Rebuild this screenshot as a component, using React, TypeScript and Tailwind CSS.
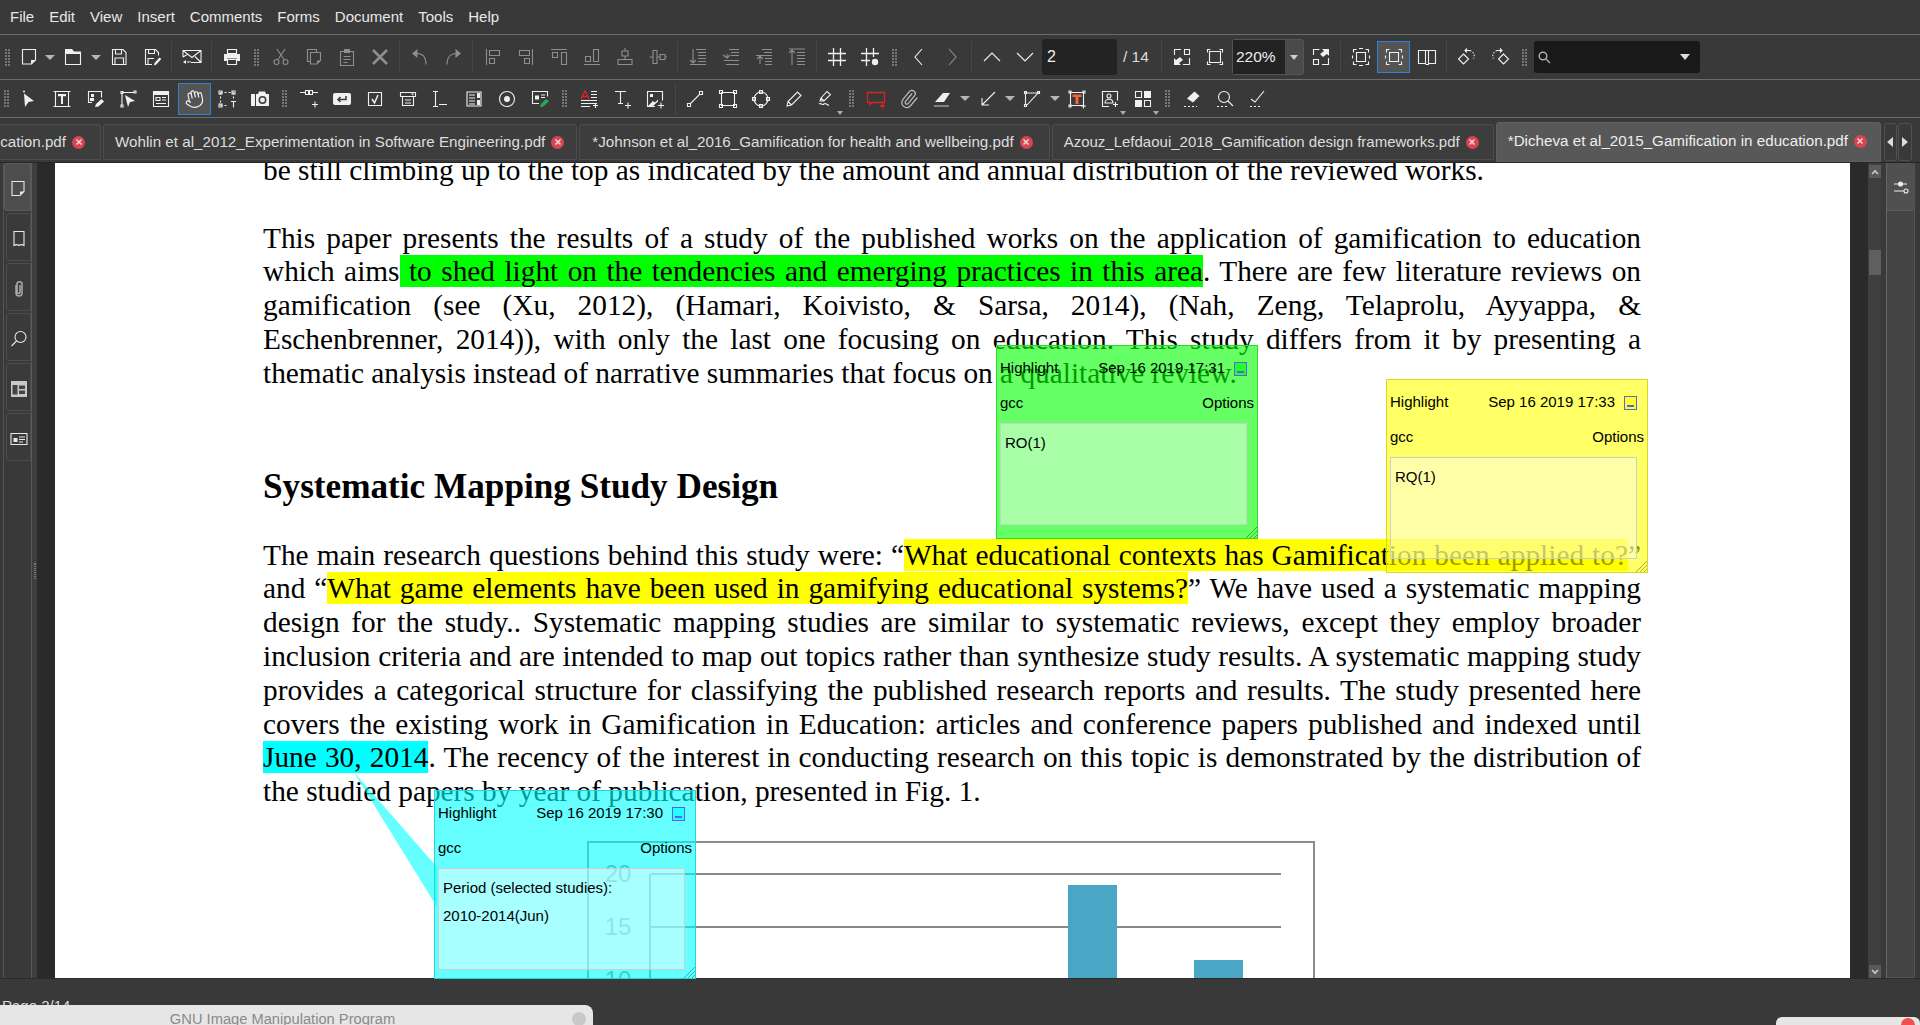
import { Hand, Paperclip } from "lucide-react"
import type { ReactNode } from "react"

const f = { fill: "currentColor", stroke: "none" }

// 20x20 toolbar glyphs, traced from the app
const icons: Record<string, ReactNode> = {
  new: <><path d="M3.5 2.5h13v10.5l-4 4h-9z" /><path d="M12 17v-4h4.5z" {...f} /></>,
  open: <><path d="M2.5 5.5h15v12h-15z" /><path d="M2 2h7l2 2.5h7v2.5H2z" {...f} /></>,
  save: <><path d="M3.5 2.5h10.5l3 3v12h-13.5z" /><path d="M6.5 2.5v4.5h6v-4.5M6 17.5v-6.5h8.5v6.5" /></>,
  saveas: <><path d="M10 17.5h-6.5v-15h10l3 3v3" /><path d="M6.5 2.5v4h6v-4M6 17v-5.5h6" /><path d="M12 18.5l.5-2.5 5-5.5 1.800 1.500-5 5.500z" {...f} /></>,
  mail: <><path d="M1 10v-6.500h18v12h-10M1 3.500l9 7 9-7M19 15.500l-6-6M1 10l5-3" /><path d="M1 15l3-2v4z" {...f} /><path d="M6 14v2M8 14v1.500" /></>,
  print: <><path d="M5.500 2.500h9v4h-9z" /><path d="M2 7h16v7h-3v-2.500H5V14H2z" {...f} /><path d="M5.500 12.500h9v5h-9z" /></>,
  cut: <><path d="M6 2l7 10.500M14 2L7 12.500" /><circle cx="5.500" cy="15" r="2.500" /><circle cx="14.500" cy="15" r="2.500" /></>,
  copy: <><path d="M6 14.500H3.500v-12h9v3" /><path d="M6.500 5.500h10v8L13 17H6.500z" /><path d="M13 17v-3.500h3.500z" {...f} /></>,
  paste: <><path d="M3.500 4.500h13v14h-13z" /><path d="M7 2h6v4H7z" {...f} /><path d="M6.500 9.500h7M6.500 12.500h7M6.500 15.500h4" /></>,
  del: <path strokeWidth="2.600" d="M3 3l14 14M17 3L3 17" />,
  undo: <><path d="M2 6.500L7.500 2v9z" {...f} /><path d="M7 6.500c5 0 9 3 9 11" /></>,
  redo: <><path d="M18 6.500L12.500 2v9z" {...f} /><path d="M13 6.500c-5 0-9 3-9 11" /></>,
  alL: <path d="M3.500 2v16M6.500 3.500h10v5h-10zM6.500 11.500h5v5h-5z" />,
  alR: <path d="M16.500 2v16M3.500 3.500h10v5h-10zM8.500 11.500h5v5h-5z" />,
  alT: <path d="M3.500 5.500h5v5h-5zM12.500 5.500h5v12h-5zM2 2.500h16" />,
  alB: <path d="M2 17.500h16M3.500 9.500h5v5h-5zM11.500 2.500h5v12h-5z" />,
  alC: <path d="M10 1v3M10 9v3M7 4h6v5H7zM3 12.500h14v5H3z" />,
  alM: <path d="M1.500 10H5M9 10h3M17 10h2M5 3.500h4v13H5zM12 7.500h5v5h-5z" />,
  ordF: <path d="M5 2v14M2 13l3 3 3-3M8 2.500h10M10 5.500h8M10 8.500h8M10 11.500h8M10 14.500h8M2 17.500h16" />,
  ordB: <path d="M2 8l4 3 3-3M6 11V7M8 2.500h10M10 5.500h8M10 8.500h8M3 13.500h15M5 17.500h13" />,
  ordU: <path d="M6 17V9M3 12l3-3 3 3M8 2.500h10M10 5.500h8M2 8.500h16M11 11.500h7M11 14.500h7M11 17.500h7" />,
  ordT: <path d="M5 18V3M2 6l3-3 3 3M2 2h16M10 5.500h8M10 8.500h8M10 11.500h8M10 14.500h8M10 17.500h8" />,
  grid: <path strokeWidth="1.300" d="M1 6.500h18M1 13.500h18M6.500 1v18M13.500 1v18" />,
  snap: <><path strokeWidth="1.300" d="M1 6.500h18M1 13.500h9M6.500 1v18M13.500 1v9" /><circle cx="15" cy="15" r="3.200" {...f} /></>,
  prev: <path d="M13 2l-7 8 7 8" />,
  next: <path d="M7 2l7 8-7 8" />,
  up: <path d="M2 14l8-8 8 8" />,
  down: <path d="M2 6l8 8 8-8" />,
  fit: <><path d="M2.500 8V2.500H9M12.500 2.500h5v5h-5zM17.500 11v6.500H11" /><path d="M2 18v-7l2 2 4-3 3 3-4 3 2 2z" {...f} /></>,
  actual: <path d="M2.500 5.500v-3h3M14.500 2.500h3v3M17.500 14.500v3h-3M5.500 17.500h-3v-3M4.500 4.500h11v11h-11z" />,
  expand: <><path d="M2.500 8V2.500h6M2.500 12.500h5v5h-5zM17.500 11v6.500H11" /><path d="M18 2v7l-2-2-4 3-3-3 4-3-2-2z" {...f} /></>,
  fitW: <path d="M2.500 5.500v-3h3M14.500 2.500h3v3M17.500 14.500v3h-3M5.500 17.500h-3v-3M5.500 5.500h9v9h-9zM8 1.500h4M8 18.500h4M1.500 8.500v3M18.500 8.500v3" />,
  fitP: <path d="M2.500 5.500v-3h3M14.500 2.500h3v3M17.500 14.500v3h-3M5.500 17.500h-3v-3M5.500 5.500h9v9h-9zM1.500 8.500v3M18.500 8.500v3" />,
  book: <path d="M1.500 3.500h7v13h-7zM11.500 3.500h7v13h-7zM8.500 3.500h3v14h-3" />,
  rotL: <><path d="M6.500 7l5 5-5 5-5-5z" /><path strokeDasharray="1.500 1.500" d="M13 3.500c3 1 5.500 4 3.500 8" /><path d="M13 3.500H8M10 1.500l-2 2 2 2" /></>,
  rotR: <><path d="M13.500 7l-5 5 5 5 5-5z" /><path strokeDasharray="1.500 1.500" d="M7 3.500c-3 1-5.500 4-3.500 8" /><path d="M7 3.500h5M10 1.500l2 2-2 2" /></>,
  pick: <><circle cx="5" cy="2.500" r="1" {...f} /><path d="M5 4.500l10 7.500-5.500 1-3.500 5z" {...f} /></>,
  field: <><path d="M3.500 2.500v15M16.500 2.500v15M1.500 2.500h17M1.500 17.500h17" /><path d="M6 5h8v2.200h-3V15H9V7.200H6z" {...f} /></>,
  editImg: <><path d="M7 13.500H3.500v-11h13v6" /><path d="M6 5h3v3H6zM5 9h4v3H5z" {...f} /><path d="M10 18l1-3 5.500-5 2.500 2.500-5.500 5z" {...f} /></>,
  linkSel: <><path d="M4 4v12M4 3.500h12" /><path d="M3 2.500h2v2H3zM16 2h2v2h-2zM3 16h2v2H3z" /><path d="M7 6l10 6-5 1-2 5z" {...f} /></>,
  form: <><path d="M2.500 2.500h15v15h-15z" /><path d="M2.500 2.500h15V6h-15z" {...f} /><path d="M5 8.500h4v3H5zM11 8.500h4M11 11h4M5 14.500h10" /></>,
  cropT: <><path strokeDasharray="2 2" d="M3.500 3.500h13M3.500 3.500v13M3.500 16.500h7M16.500 3.500v7" /><path d="M2 2h3v3H2zM15 2h3v3h-3zM2 15h3v3H2z" /><path d="M14 12.500h5M16.500 12.500v6" /></>,
  camera: <><path d="M1 5h4v12H1zM6 5h2l1-2.500h6L16 5h3v12H6z" {...f} /><circle cx="12.500" cy="11" r="3.200" stroke="#3a3a3a" strokeWidth="1.500" fill="none" /></>,
  linkAdd: <path d="M1 3.500h5M14 3.500h5M6.500 1.500h3v4h-3zM10.500 1.500h3v4h-3zM13 15.500h6M16 12.500v6" />,
  btn: <><rect x="1" y="4" width="18" height="12" rx="2" {...f} /><path stroke="#3a3a3a" strokeWidth="1.500" d="M14 7v3.500H6M8.500 8L6 10.500 8.500 13" /></>,
  check: <><path d="M3.500 3.500h13v13h-13z" /><path strokeWidth="1.500" d="M7 10l2.500 4L13 6" /></>,
  combo: <><path d="M2.500 3.500h15v4h-15zM4.500 7.500v9h11v-9M7 11h6M7 14h6" /><path d="M13 4.500h3l-1.500 2z" {...f} /></>,
  date: <path d="M2 2.500h5M4.500 2.500v15M2 17.500h5M8 15.500h8" />,
  list: <><path d="M3 3h14v14H3z" /><path d="M5 6h6M5 9h6M5 12h6M5 15h6" /><path d="M13 4h3v5h-3zM13 11h3v5h-3z" {...f} /></>,
  radio: <><circle cx="10" cy="10" r="7.500" /><circle cx="10" cy="10" r="3" {...f} /></>,
  sign: <><path d="M9 14.500H2.500v-12h15v5" /><path d="M5 6.500h4v4H5z" {...f} /><path d="M11 6h4M11 8.500h4" /><path d="M10 18l1-3 5-5 3 2-5.500 5.500z" fill="#2aa85a" stroke="none" /></>,
  redA: <><path stroke="#e0211f" strokeWidth="1.300" d="M2 10l4-8 4 8M3.500 7.500h5" /><path d="M12 2.500h6M12 5.500h6M12 8.500h6M2 11.500h16M2 14.500h16M2 17.500h9M14 16.500h5M16.500 14v5" /></>,
  textAdd: <path d="M3 2.500h11M8.500 2.500v12M6 14.500h5M13 16.500h6M16 13.500v6" />,
  imgAdd: <><path d="M10 17.500H2.500v-15h15v9" /><path d="M3 17l5-5 2 1.500 3-3v2l-5 4.500z" {...f} /><path d="M5 5h3v3H5z" {...f} /><path d="M13 16.500h6M16 13.500v6" /></>,
  line: <path d="M5 15L15 5M2.500 14.500h3v3h-3zM14.500 2.500h3v3h-3z" />,
  rect: <path d="M3.500 3.500h13v13h-13zM1.500 1.500h3v3h-3zM15.500 1.500h3v3h-3zM15.500 15.500h3v3h-3zM1.500 15.500h3v3h-3z" />,
  oval: <><circle cx="10" cy="10" r="7" /><path d="M8.500 1.500h3v3h-3zM8.500 15.500h3v3h-3zM1.500 8.500h3v3h-3zM15.500 8.500h3v3h-3z" /></>,
  pencil: <path d="M3 17l1-4.500L13.500 3l3.500 3.500L7.500 16zM4 12.500l3.500 3.500" />,
  pen: <><path d="M3 12l1-3 6-6.500 3.500 3-6.500 6.500zM4 9l3 3" /><path d="M2 15c2-2 3 2 5 0s3 2 5 1" /></>,
  note: <><path stroke="#d9261c" strokeWidth="1.300" d="M1.500 3.500h17v10H6l-2 2v-2H1.500zM14 17h5M16.500 14.500v5" /></>,
  hl: <><path d="M3 13l8-9h7l-6 9z" {...f} /><path stroke="#9a9a9a" strokeWidth="1.500" d="M2 17h15" /></>,
  arrow: <path d="M17 3L4 16M4 9v7h7" />,
  poly: <path d="M4 4h12L5 16M3.500 3.500v12M2.500 2.500h2v2h-2zM15.500 2.500h2v2h-2zM2.500 15.500h2v2h-2z" />,
  textbox: <><path d="M3.500 3.500h13v13h-13zM2 2h2v2H2zM16 2h2v2h-2zM2 16h2v2H2z" /><path d="M5.500 5.500h9V8h-3v7h-3V8h-3z" fill="#f2683c" stroke="none" /><path d="M14 17h5M16.500 14.500v5" /></>,
  person: <><path d="M9 17.500H2.500v-15h15v9" /><circle cx="9" cy="7" r="2" /><path d="M5 14c0-5 8-5 8 0h-8zM13 15.500h5M15.500 13v5" /></>,
  tiles: <><path d="M2.500 2.500h6v6h-6zM11.500 11.500h6v6h-6z" /><path d="M11 2h7v7h-7zM2 11h7v7H2z" {...f} /></>,
  eraser: <><path d="M5 9.500L12.500 2.500l5 4.500-6.500 6.500z" {...f} /><path strokeDasharray="2 2" d="M2 17.500h13" /></>,
  find: <><circle cx="9" cy="8" r="5.500" /><path d="M13 12l5 5" /><path strokeDasharray="2 2" d="M2 17.500h12" /></>,
  tick: <><path d="M3 10l4 3 9-11" /><path strokeDasharray="2 2" d="M2 17.500h12" /></>,
}

const dimmed = new Set(["cut", "copy", "paste", "del", "undo", "redo", "alL", "alR", "alT", "alB", "alC", "alM", "ordF", "ordB", "ordU", "ordT", "next"])
const withDrop = new Set(["pen", "person", "tiles"])

function Tool({ name, on, w = "w-[33px]" }: { name: string; on?: boolean; w?: string }) {
  return (
    <div className={`relative ${w} h-[32px] shrink-0 flex items-center justify-center ${dimmed.has(name) ? "text-[#8e8e8e]" : "text-[#f0f0f0]"} ${on ? "bg-[#545454] border border-[#2f80d8]" : ""}`}>
      <svg width="20" height="20" viewBox="0 0 20 20" fill="none" stroke="currentColor" strokeWidth="1.100">
        {icons[name]}
      </svg>
      {withDrop.has(name) && (
        <span className="absolute right-[1px] bottom-0 w-0 h-0 border-x-[3.500px] border-x-transparent border-t-[4px] border-t-[#aaa]" />
      )}
    </div>
  )
}

const Sep = () => (
  <div className="w-[7px] shrink-0 h-[32px] flex justify-center">
    <div className="w-px h-full bg-[#474747]" />
  </div>
)

function Grip({ w = "w-[16px]" }: { w?: string }) {
  return (
    <div className={`${w} shrink-0 flex justify-center`}>
      <div className="grid grid-cols-2 gap-px">
        {Array.from({ length: 12 }).map((_, i) => (
          <div key={i} className="w-[2px] h-[2px] bg-[#777]" />
        ))}
      </div>
    </div>
  )
}

function Caret({ w }: { w: string }) {
  return (
    <div className={`${w} shrink-0 flex justify-center`}>
      <div className="w-0 h-0 border-x-[5px] border-x-transparent border-t-[5px] border-t-[#b5b5b5]" />
    </div>
  )
}

const tools = (names: string[]) => names.map((n) => <Tool key={n} name={n} />)

function TopToolbar() {
  return (
    <div className="h-[45px] flex items-center border-b border-[#6c6c6c] text-[#eee]">
      <Grip w="w-[15px]" />
      <Tool name="new" w="w-[28px]" />
      <Caret w="w-[14px]" />
      <Tool name="open" w="w-[32px]" />
      <Caret w="w-[13px]" />
      <Tool name="save" />
      <Tool name="saveas" />
      <Sep />
      <Tool name="mail" />
      <Sep />
      <Tool name="print" />
      <Grip />
      {tools(["cut", "copy", "paste", "del"])}
      <Sep />
      {tools(["undo", "redo"])}
      <Sep />
      {tools(["alL", "alR", "alT", "alB", "alC", "alM"])}
      <Sep />
      {tools(["ordF", "ordB", "ordU", "ordT"])}
      <Sep />
      {tools(["grid", "snap"])}
      <Grip />
      {tools(["prev", "next"])}
      <Sep />
      {tools(["up", "down"])}
      <div className="w-[75px] h-[36px] ml-[1px] shrink-0 bg-[#232323] rounded-[3px] flex items-center pl-[5px] text-[16px]">2</div>
      <div className="w-[41px] shrink-0 pl-[6px] text-[15.500px] text-[#ddd]">/ 14</div>
      <Sep />
      {tools(["fit", "actual"])}
      <div className="w-[72px] h-[36px] shrink-0 ml-[1px] flex rounded-[3px] border border-[#555] bg-[#4a4a4a]">
        <div className="w-[52px] bg-[#232323] flex items-center pl-[3px] text-[15.500px]">220%</div>
        <div className="flex-1 flex items-center justify-center">
          <div className="w-0 h-0 border-x-[4px] border-x-transparent border-t-[5px] border-t-[#ccc]" />
        </div>
      </div>
      <Tool name="expand" />
      <Sep />
      <Tool name="fitW" />
      <Tool name="fitP" on />
      <Tool name="book" />
      <Sep />
      {tools(["rotL", "rotR"])}
      <Grip />
      <div className="w-[166px] h-[32px] shrink-0 ml-[2px] bg-[#191919] rounded-[3px] flex items-center justify-between pl-[3px] pr-[10px]">
        <svg width="14" height="14" viewBox="0 0 14 14" fill="none" stroke="#aaa" strokeWidth="1.500">
          <circle cx="6" cy="6" r="3.800" />
          <path d="M9 9l4 4" />
        </svg>
        <div className="w-0 h-0 border-x-[5px] border-x-transparent border-t-[6px] border-t-[#ddd]" />
      </div>
    </div>
  )
}

function SecondToolbar() {
  return (
    <div className="h-[38px] flex items-center border-b border-[#6c6c6c]">
      <Grip w="w-[12.500px]" />
      <Tool name="pick" />
      <Tool name="field" />
      <Tool name="editImg" />
      <Tool name="linkSel" />
      <Tool name="form" />
      <div className="w-[33px] h-[32px] shrink-0 flex items-center justify-center bg-[#545454] border border-[#2f80d8] text-[#f0f0f0]">
        <Hand size={20} strokeWidth={1.400} className="-rotate-12" />
      </div>
      <Tool name="cropT" />
      <Tool name="camera" />
      <Grip />
      {tools(["linkAdd", "btn", "check", "combo", "date", "list", "radio", "sign"])}
      <Grip />
      {tools(["redA", "textAdd", "imgAdd"])}
      <Sep />
      {tools(["line", "rect", "oval", "pencil", "pen"])}
      <Grip />
      <Tool name="note" />
      <div className="w-[33px] h-[32px] shrink-0 flex items-center justify-center text-[#bdbdbd]">
        <Paperclip size={20} strokeWidth={1.500} className="rotate-[-5deg]" />
      </div>
      <Tool name="hl" />
      <Caret w="w-[13px]" />
      <Tool name="arrow" />
      <Caret w="w-[11px]" />
      <Tool name="poly" />
      <Caret w="w-[12px]" />
      <Tool name="textbox" />
      <Tool name="person" />
      <Tool name="tiles" />
      <Grip />
      {tools(["eraser", "find", "tick"])}
    </div>
  )
}

function CloseDot() {
  return (
    <span className="w-[13px] h-[13px] shrink-0 rounded-full bg-[#d84452] flex items-center justify-center">
      <svg width="8" height="8" viewBox="0 0 8 8" stroke="#f3d5d8" strokeWidth="1.500">
        <path d="M1.500 1.500l5 5M6.500 1.500l-5 5" />
      </svg>
    </span>
  )
}

function Tab({ label, active, pad = "pl-[11px] pr-[12px]" }: { label: string; active?: boolean; pad?: string }) {
  return (
    <div className={`shrink-0 flex items-center gap-[6px] rounded-t-[3px] border ${pad} ${active ? "h-[40px] pb-[2px] bg-[#585858] border-[#606060] text-[#eee]" : "h-[36px] mb-[2px] bg-[#3d3d3d] border-[#4e4e4e] text-[#ddd]"}`}>
      <span>{label}</span>
      <CloseDot />
    </div>
  )
}

function Tabs() {
  return (
    <div className="h-[45px] flex items-end gap-[2px] border-b border-[#262626] text-[15.200px] whitespace-nowrap">
      <div className="w-[101px] h-[36px] mb-[2px] shrink-0 flex items-center justify-end gap-[6px] pr-[15px] overflow-hidden rounded-tr-[3px] border border-l-0 border-[#4e4e4e] bg-[#3d3d3d] text-[#ddd]">
        <span>Gamification in education.pdf</span>
        <CloseDot />
      </div>
      <Tab label="Wohlin et al_2012_Experimentation in Software Engineering.pdf" />
      <Tab label="*Johnson et al_2016_Gamification for health and wellbeing.pdf" pad="pl-[12px] pr-[16px]" />
      <div className="text-[15px]">
        <Tab label="Azouz_Lefdaoui_2018_Gamification design frameworks.pdf" pad="pl-[11px] pr-[14px]" />
      </div>
      <Tab label="*Dicheva et al_2015_Gamification in education.pdf" active pad="pl-[11px] pr-[13px]" />
      <div className="flex gap-[1px] ml-[1px] mb-[1px]">
        <div className="w-[13px] h-[38px] rounded-[3px] border border-[#505050] flex items-center justify-center">
          <div className="w-0 h-0 border-y-[5px] border-y-transparent border-r-[6px] border-r-[#ddd]" />
        </div>
        <div className="w-[14px] h-[38px] rounded-[3px] border border-[#505050] flex items-center justify-center">
          <div className="w-0 h-0 border-y-[5px] border-y-transparent border-l-[6px] border-l-[#ddd]" />
        </div>
      </div>
    </div>
  )
}

const railIcons: ReactNode[] = [
  <><path d="M3 1.500h12v10L11 15.500H3z" /><path d="M11 15v-3.500h4z" fill="currentColor" stroke="none" /></>,
  <path d="M4 1.500h10v14c-2-1.500-3-1.500-5 0-2-1.500-3-1.500-5 0z" />,
  <path stroke="#aaa" strokeWidth="1.500" d="M6 5v8c0 4 6 4 6 0V4c0-3-5-3-5 0v8c0 2 3 2 3 0V5" />,
  <><circle cx="10.500" cy="7" r="5.500" /><path d="M6.500 11L1.500 16" /></>,
  <><path d="M1 1h16v16H1z" fill="#c8c8c8" stroke="none" /><path d="M2.500 5h5v9.500h-5zM9 5.500h6v3.500H9zM9 10.500h6v3.500H9z" fill="#444" stroke="none" /></>,
  <><path d="M1 3.500h16v11H1z" /><path d="M3.500 8h4v4h-4z" fill="currentColor" stroke="none" /><path d="M9 7h6M9 9.500h6M9 12h4" /></>,
]

function LeftRail() {
  return (
    <div className="w-[55px] shrink-0 flex">
      <div className="w-[4px] shrink-0 border-r border-[#555]" />
      <div className="w-[28px] shrink-0 flex flex-col items-end gap-[2px] border-r border-[#5a5a5a]">
        {railIcons.map((icon, i) => (
          <div key={i} className={`h-[48px] pt-[4px] flex items-center justify-center rounded-l-[3px] border ${i === 0 ? "w-[27px] bg-[#4d4d4d] border-[#5c5c5c]" : "w-[25px] bg-[#3a3a3a] border-[#4d4d4d]"} text-[#e8e8e8]`}>
            <svg width="18" height="18" viewBox="0 0 18 18" fill="none" stroke="currentColor" strokeWidth="1.100">{icon}</svg>
          </div>
        ))}
      </div>
      <div className="w-[5px] shrink-0 bg-[#3e3e3e] flex items-center justify-center">
        <div className="w-[2px] h-[16px] border-x border-dotted border-[#777]" />
      </div>
      <div className="flex-1 bg-[#2a2a2a]" />
    </div>
  )
}

function RightRail() {
  return (
    <div className="w-[70px] shrink-0 flex">
      <div className="w-[18px] shrink-0 bg-[#2a2a2a]" />
      <div className="w-[13px] shrink-0 bg-[#3f3f3f] flex flex-col items-center">
        <div className="w-[12px] h-[13px] mt-[2px] bg-[#5a5a5a] flex items-center justify-center text-[#ccc]">
          <svg width="8" height="6" viewBox="0 0 8 6" fill="none" stroke="currentColor" strokeWidth="1.600"><path d="M1 5l3-3 3 3" /></svg>
        </div>
        <div className="w-[12px] h-[25px] mt-[72px] bg-[#5f5f5f]" />
        <div className="w-[12px] h-[13px] mt-auto bg-[#5a5a5a] flex items-center justify-center text-[#ccc]">
          <svg width="8" height="6" viewBox="0 0 8 6" fill="none" stroke="currentColor" strokeWidth="1.600"><path d="M1 1l3 3 3-3" /></svg>
        </div>
      </div>
      <div className="w-[6px] shrink-0 border-r border-[#666] bg-[#3a3a3a]" />
      <div className="w-[28px] shrink-0 bg-[#444] border-r border-b border-[#555]">
        <div className="h-[48px] bg-[#505050] border-b border-[#5f5f5f] rounded-r-[3px] flex items-center justify-center text-[#eee]">
          <svg width="18" height="18" viewBox="0 0 18 18" fill="none" stroke="currentColor" strokeWidth="1.100">
            <path d="M2 6h13M2 13h10" />
            <circle cx="8.500" cy="6" r="2" fill="currentColor" />
            <circle cx="14" cy="13" r="2" />
          </svg>
        </div>
      </div>
    </div>
  )
}

function Line({ children }: { children: ReactNode }) {
  return <div className="text-justify [text-align-last:justify] whitespace-nowrap">{children}</div>
}

function Chart() {
  const label = { fontFamily: "Liberation Sans", fontSize: 24, fill: "#8a8a8a", textAnchor: "middle" as const }
  return (
    <svg width="740" height="150" viewBox="0 0 740 150" className="ml-[324px] mt-[32px]" fill="none">
      <path d="M1 200V1h726v200" stroke="#8c8c8c" strokeWidth="2" />
      <path d="M64 33h630M64 86h630M64 139h630" stroke="#888" strokeWidth="2" />
      <path d="M63 33v120" stroke="#888" strokeWidth="2" />
      <text x="31" y="41" {...label}>20</text>
      <text x="31" y="94" {...label}>15</text>
      <text x="31" y="147" {...label}>10</text>
      <rect x="481" y="44" width="49" height="120" fill="#49a7c5" />
      <rect x="607" y="119" width="49" height="60" fill="#49a7c5" />
    </svg>
  )
}

function Page() {
  return (
    <div className="flex-1 min-w-0 bg-white overflow-hidden text-black font-['Liberation_Serif',serif] text-[29.330px] leading-[33.800px] tracking-normal">
      <div className="-mt-[9px] w-[1378px] ml-[208px]">
        <div>be still climbing up to the top as indicated by the amount and annual distribution of the reviewed works.</div>
        <div className="mt-[33.800px]">
          <Line>This paper presents the results of a study of the published works on the application of gamification to education</Line>
          <Line>which aims<span className="bg-[#00ff00]"> to shed light on the tendencies and emerging practices in this area</span>. There are few literature reviews on</Line>
          <Line>gamification (see (Xu, 2012), (Hamari, Koivisto, &amp; Sarsa, 2014), (Nah, Zeng, Telaprolu, Ayyappa, &amp;</Line>
          <Line>Eschenbrenner, 2014)), with only the last one focusing on education. This study differs from it by presenting a</Line>
          <div>thematic analysis instead of narrative summaries that focus on a qualitative review.</div>
        </div>
        <h2 className="mt-[76px] font-bold text-[35.200px] leading-[40px]">Systematic Mapping Study Design</h2>
        <div className="mt-[32px]">
          <Line>The main research questions behind this study were: “<span className="bg-[#ffff00]">What educational contexts has Gamification been applied to?</span>”</Line>
          <Line>and “<span className="bg-[#ffff00]">What game elements have been used in gamifying educational systems?</span>” We have used a systematic mapping</Line>
          <Line>design for the study.. Systematic mapping studies are similar to systematic reviews, except they employ broader</Line>
          <Line>inclusion criteria and are intended to map out topics rather than synthesize study results. A systematic mapping study</Line>
          <Line>provides a categorical structure for classifying the published research reports and results. The study presented here</Line>
          <Line>covers the existing work in Gamification in Education: articles and conference papers published and indexed until</Line>
          <Line><span className="bg-[#00ffff]">June 30, 2014</span>. The recency of the interest in conducting research on this topic is demonstrated by the distribution of</Line>
          <div>the studied papers by year of publication, presented in Fig. 1.</div>
        </div>
        <Chart />
      </div>
    </div>
  )
}

function Note({ place, tone, line, btn, date, lines }: { place: string; tone: string; line: string; btn: string; date: string; lines: string[] }) {
  return (
    <div className={`absolute ${place} w-[262px] border ${tone} pl-[3px] pt-[5px] text-[15px] text-black`}>
      <div className="h-[35px] flex items-center pr-[10px]">
        <span>Highlight</span>
        <span className="ml-auto">{date}</span>
        <span className={`ml-[9px] w-[13px] h-[14px] border border-[#5a62e6] ${btn} flex items-end justify-center pb-[2px]`}>
          <span className="w-[7px] h-[2px] bg-[#5a62e6]" />
        </span>
      </div>
      <div className="h-[35px] flex items-center justify-between pr-[3px]">
        <span>gcc</span>
        <span>Options</span>
      </div>
      <div className="mt-[2px] w-[247px] h-[102px] bg-white/[.43] border border-[#c9d0c9] pl-[4px] pt-[5px] leading-[28px]">
        {lines.map((l) => <div key={l}>{l}</div>)}
      </div>
      <svg width="12" height="12" viewBox="0 0 12 12" className={`absolute right-0 bottom-0 ${line}`} stroke="currentColor" fill="none">
        <path d="M1 12L12 1M5 12l7-7M9 12l3-3" />
      </svg>
    </div>
  )
}

export default function App() {
  return (
    <div className="relative w-[1920px] h-[1025px] overflow-hidden flex flex-col bg-[#393939] text-[#e8e8e8] font-['Liberation_Sans',sans-serif]">
      <div className="h-[35px] flex items-center gap-[15px] px-[10px] text-[15px] border-b border-[#6c6c6c]">
        {["File", "Edit", "View", "Insert", "Comments", "Forms", "Document", "Tools", "Help"].map((m) => (
          <span key={m}>{m}</span>
        ))}
      </div>
      <TopToolbar />
      <SecondToolbar />
      <Tabs />
      <div className="h-[816px] flex border-b border-[#2a2a2a]">
        <LeftRail />
        <Page />
        <RightRail />
      </div>
      <div className="flex-1 pl-[2px] pt-[16px] text-[15px] text-[#ddd]">Page 2/14</div>

      {/* popup notes float over the page */}
      <svg width="100" height="150" viewBox="0 0 100 150" className="absolute left-[345px] top-[765px]">
        <path d="M8 6L92 102V142z" fill="#00ffff" fillOpacity="0.6" />
      </svg>
      <Note place="left-[996px] top-[345px] h-[194px]" tone="bg-[#00ff00]/60 border-[#2bd92b]" line="text-[#2bb52b]" btn="bg-[#22ff22]" date="Sep 16 2019 17:31" lines={["RO(1)"]} />
      <Note place="left-[1386px] top-[379px] h-[194px]" tone="bg-[#ffff00]/60 border-[#d8d820]" line="text-[#b5b52b]" btn="bg-[#ffff22]" date="Sep 16 2019 17:33" lines={["RQ(1)"]} />
      <Note place="left-[434px] top-[790px] h-[189px]" tone="bg-[#00ffff]/60 border-[#20d8d8]" line="text-[#2bb5b5]" btn="bg-[#22ffff]" date="Sep 16 2019 17:30" lines={["Period (selected studies):", "2010-2014(Jun)"]} />

      {/* other desktop windows peeking in at the bottom */}
      <div className="absolute left-0 bottom-0 w-[593px] h-[20px] overflow-hidden bg-[#e6e6e6] rounded-tr-[8px] flex items-center justify-center pt-[8px] pr-[28px] text-[14.700px] text-[#8a8a8a]">
        GNU Image Manipulation Program
        <span className="absolute right-[7px] top-[7px] w-[14px] h-[14px] rounded-full bg-[#c8c8c8]" />
      </div>
      <div className="absolute right-0 bottom-0 w-[144px] h-[8px] bg-[#e6e6e6] rounded-t-[6px] overflow-hidden">
        <span className="absolute right-[5px] top-[1px] w-[14px] h-[14px] rounded-full bg-[#f05050]" />
      </div>
    </div>
  )
}
